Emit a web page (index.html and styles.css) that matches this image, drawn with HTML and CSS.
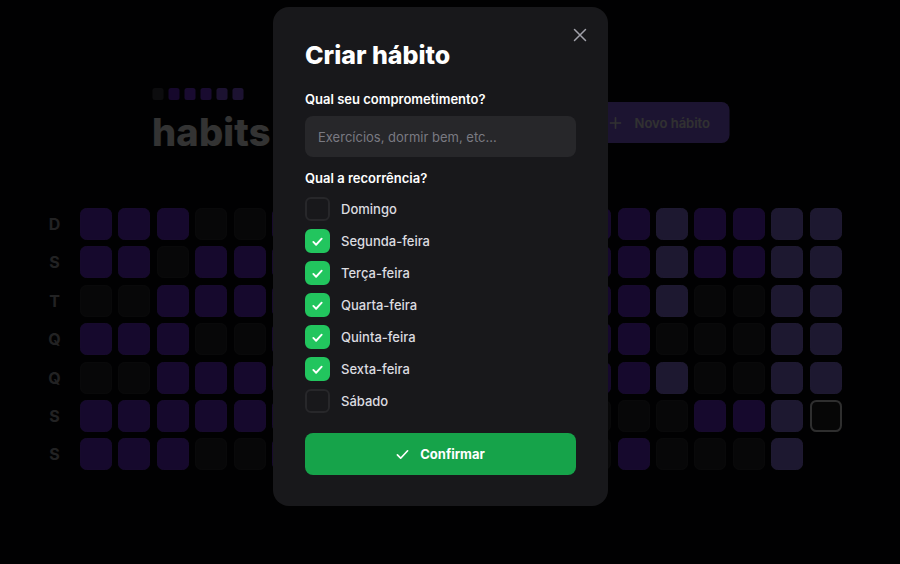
FILE: index.html
```html
<!DOCTYPE html>
<html lang="pt-BR">
<head>
<meta charset="utf-8">
<title>habits</title>
<link rel="stylesheet" href="styles.css">
</head>
<body>
<div class="app">
  <header class="header">
    <div class="logo">
      <div class="logo-squares">
        <span class="ls ls0"></span><span class="ls ls1"></span><span class="ls ls2"></span><span class="ls ls3"></span><span class="ls ls4"></span><span class="ls ls5"></span>
      </div>
      <div class="logo-text">habits</div>
    </div>
    <button class="new-habit" type="button">
      <svg width="12" height="12" viewBox="0 0 12 12" fill="none" stroke="currentColor" stroke-width="1.6" stroke-linecap="round"><path d="M6 0.8v10.4M0.8 6h10.4"/></svg>
      Novo hábito
    </button>
  </header>

  <section class="summary">
    <div class="weekdays">
      <div class="wd">D</div><div class="wd">S</div><div class="wd">T</div><div class="wd">Q</div><div class="wd">Q</div><div class="wd">S</div><div class="wd">S</div>
    </div>
    <div class="grid">
      <!-- col 1 -->
      <div class="cell c1"></div><div class="cell c1"></div><div class="cell c0"></div><div class="cell c1"></div><div class="cell c0"></div><div class="cell c1"></div><div class="cell c1"></div>
      <!-- col 2 -->
      <div class="cell c1"></div><div class="cell c1"></div><div class="cell c0"></div><div class="cell c1"></div><div class="cell c0"></div><div class="cell c1"></div><div class="cell c1"></div>
      <!-- col 3 -->
      <div class="cell c1"></div><div class="cell c0"></div><div class="cell c1"></div><div class="cell c1"></div><div class="cell c1"></div><div class="cell c1"></div><div class="cell c1"></div>
      <!-- col 4 -->
      <div class="cell c0"></div><div class="cell c1"></div><div class="cell c1"></div><div class="cell c0"></div><div class="cell c1"></div><div class="cell c1"></div><div class="cell c0"></div>
      <!-- col 5 -->
      <div class="cell c0"></div><div class="cell c1"></div><div class="cell c1"></div><div class="cell c0"></div><div class="cell c1"></div><div class="cell c1"></div><div class="cell c0"></div>
      <!-- col 6 -->
      <div class="cell c1"></div><div class="cell c1"></div><div class="cell c1"></div><div class="cell c1"></div><div class="cell c1"></div><div class="cell c1"></div><div class="cell c1"></div>
      <!-- col 7 -->
      <div class="cell c1"></div><div class="cell c0"></div><div class="cell c1"></div><div class="cell c1"></div><div class="cell c0"></div><div class="cell c1"></div><div class="cell c1"></div>
      <!-- col 8 -->
      <div class="cell c0"></div><div class="cell c1"></div><div class="cell c1"></div><div class="cell c0"></div><div class="cell c1"></div><div class="cell c1"></div><div class="cell c0"></div>
      <!-- col 9 -->
      <div class="cell c1"></div><div class="cell c1"></div><div class="cell c0"></div><div class="cell c1"></div><div class="cell c1"></div><div class="cell c0"></div><div class="cell c1"></div>
      <!-- col 10 -->
      <div class="cell c1"></div><div class="cell c0"></div><div class="cell c1"></div><div class="cell c1"></div><div class="cell c0"></div><div class="cell c1"></div><div class="cell c1"></div>
      <!-- col 11 -->
      <div class="cell c0"></div><div class="cell c1"></div><div class="cell c1"></div><div class="cell c1"></div><div class="cell c1"></div><div class="cell c0"></div><div class="cell c0"></div>
      <!-- col 12 -->
      <div class="cell c1"></div><div class="cell c1"></div><div class="cell c0"></div><div class="cell c0"></div><div class="cell c1"></div><div class="cell c1"></div><div class="cell c1"></div>
      <!-- col 13 -->
      <div class="cell c1"></div><div class="cell c1"></div><div class="cell c1"></div><div class="cell c0"></div><div class="cell c1"></div><div class="cell c0"></div><div class="cell c1"></div>
      <!-- col 14 -->
      <div class="cell c1"></div><div class="cell c1"></div><div class="cell c1"></div><div class="cell c1"></div><div class="cell c1"></div><div class="cell c0"></div><div class="cell c0"></div>
      <!-- col 15 -->
      <div class="cell c1"></div><div class="cell c1"></div><div class="cell c1"></div><div class="cell c1"></div><div class="cell c1"></div><div class="cell c0"></div><div class="cell c1"></div>
      <!-- col 16 -->
      <div class="cell c2"></div><div class="cell c2"></div><div class="cell c2"></div><div class="cell c0"></div><div class="cell c2"></div><div class="cell c0"></div><div class="cell c0"></div>
      <!-- col 17 -->
      <div class="cell c1"></div><div class="cell c1"></div><div class="cell c0"></div><div class="cell c0"></div><div class="cell c0"></div><div class="cell c1"></div><div class="cell c0"></div>
      <!-- col 18 -->
      <div class="cell c1"></div><div class="cell c1"></div><div class="cell c0"></div><div class="cell c0"></div><div class="cell c0"></div><div class="cell c1"></div><div class="cell c0"></div>
      <!-- col 19 -->
      <div class="cell c2"></div><div class="cell c2"></div><div class="cell c2"></div><div class="cell c2"></div><div class="cell c2"></div><div class="cell c2"></div><div class="cell c2"></div>
      <!-- col 20 -->
      <div class="cell c2"></div><div class="cell c2"></div><div class="cell c2"></div><div class="cell c2"></div><div class="cell c2"></div><div class="cell c0 today"></div>
    </div>
  </section>
</div>

<div class="overlay"></div>

<div class="dialog" role="dialog">
  <button class="close" type="button" aria-label="Fechar">
    <svg width="14" height="14" viewBox="0 0 14 14" fill="none" stroke="currentColor" stroke-width="1.5" stroke-linecap="round"><path d="M1.5 1.5l11 11M12.5 1.5l-11 11"/></svg>
  </button>
  <h2 class="title">Criar hábito</h2>
  <form class="form">
    <label class="label" for="title">Qual seu comprometimento?</label>
    <input class="input" id="title" type="text" placeholder="Exercícios, dormir bem, etc...">
    <label class="label label-gap">Qual a recorrência?</label>
    <div class="days">
      <div class="day"><span class="box"></span><span class="day-name">Domingo</span></div>
      <div class="day"><span class="box checked"><svg width="13" height="13" viewBox="0 0 14 14" fill="none" stroke="currentColor" stroke-width="2" stroke-linecap="round" stroke-linejoin="round"><path d="M2.5 7.5l3 3 6-6.5"/></svg></span><span class="day-name">Segunda-feira</span></div>
      <div class="day"><span class="box checked"><svg width="13" height="13" viewBox="0 0 14 14" fill="none" stroke="currentColor" stroke-width="2" stroke-linecap="round" stroke-linejoin="round"><path d="M2.5 7.5l3 3 6-6.5"/></svg></span><span class="day-name">Terça-feira</span></div>
      <div class="day"><span class="box checked"><svg width="13" height="13" viewBox="0 0 14 14" fill="none" stroke="currentColor" stroke-width="2" stroke-linecap="round" stroke-linejoin="round"><path d="M2.5 7.5l3 3 6-6.5"/></svg></span><span class="day-name">Quarta-feira</span></div>
      <div class="day"><span class="box checked"><svg width="13" height="13" viewBox="0 0 14 14" fill="none" stroke="currentColor" stroke-width="2" stroke-linecap="round" stroke-linejoin="round"><path d="M2.5 7.5l3 3 6-6.5"/></svg></span><span class="day-name">Quinta-feira</span></div>
      <div class="day"><span class="box checked"><svg width="13" height="13" viewBox="0 0 14 14" fill="none" stroke="currentColor" stroke-width="2" stroke-linecap="round" stroke-linejoin="round"><path d="M2.5 7.5l3 3 6-6.5"/></svg></span><span class="day-name">Sexta-feira</span></div>
      <div class="day"><span class="box"></span><span class="day-name">Sábado</span></div>
    </div>
    <button class="confirm" type="button">
      <svg width="13" height="13" viewBox="0 0 14 14" fill="none" stroke="currentColor" stroke-width="1.8" stroke-linecap="round" stroke-linejoin="round"><path d="M1.5 7.5l3.5 3.5 7.5-8"/></svg>
      Confirmar
    </button>
  </form>
</div>
</body>
</html>
```

FILE: styles.css
```css
* { box-sizing: border-box; }

html, body {
  margin: 0;
  height: 100%;
}

body {
  background: #09090a;
  color: #fff;
  font-family: Inter, "Noto Sans", "Liberation Sans", sans-serif;
  overflow: hidden;
}

.app {
  width: 880px;
  display: flex;
  flex-direction: column;
  align-items: center;
  padding-top: 88px;
}

/* Header */
.header {
  width: 577px;
  display: flex;
  justify-content: space-between;
  align-items: flex-start;
  transform: translateX(0.5px);
}

.logo-squares {
  display: flex;
  gap: 4.5px;
}

.ls {
  width: 11.5px;
  height: 11.5px;
  border-radius: 2.5px;
}
.ls0 { background: #3f3f46; }
.ls1 { background: #6d28d9; }
.ls2 { background: #7c3aed; }
.ls3 { background: #7c3aed; }
.ls4 { background: #8b5cf6; }
.ls5 { background: #8b5cf6; }

.logo-text {
  margin-top: 13px;
  font-size: 38px;
  line-height: 38px;
  font-weight: 800;
  letter-spacing: 0.2px;
  color: #fff;
}

.new-habit {
  margin-top: 14px;
  height: 41px;
  padding: 0 19px 0 20px;
  display: flex;
  align-items: center;
  gap: 13px;
  background: #8d66f6;
  border: none;
  border-radius: 8px;
  color: #f4f4f5;
  font-family: inherit;
  font-size: 13px;
  font-weight: 600;
}

/* Summary grid */
.summary {
  margin-top: 57.5px;
  display: flex;
  gap: 9.6px;
}

.weekdays {
  display: grid;
  grid-template-rows: repeat(7, 32px);
  row-gap: 6.4px;
}

.wd {
  width: 32px;
  height: 32px;
  display: flex;
  align-items: center;
  justify-content: center;
  color: #a8a8b0;
  font-size: 16px;
  font-weight: 700;
}

.grid {
  display: grid;
  grid-template-rows: repeat(7, 32px);
  grid-auto-flow: column;
  grid-auto-columns: 32px;
  gap: 6.4px;
}

.cell {
  width: 32px;
  height: 32px;
  border-radius: 6.4px;
  border: 1.6px solid transparent;
}

.c0 { background: #27272a; border-color: #303036; }
.c1 { background: #6e30de; border-color: #7234e2; }
.c2 { background: #9279f0; border-color: #957df2; }
.today { border: 2px solid #e4e4e7; background: #1f1f22; }

/* Overlay + dialog */
.overlay {
  position: fixed;
  inset: 0;
  background: rgba(0, 0, 0, 0.8);
}

.dialog {
  position: fixed;
  left: 273px;
  top: 7px;
  width: 335px;
  padding: 32px 32px 31px;
  background: #18181b;
  border-radius: 16px;
}

.close {
  position: absolute;
  top: 21px;
  right: 21px;
  width: 14px;
  height: 14px;
  padding: 0;
  border: none;
  background: none;
  color: #a1a1aa;
  display: flex;
}

.title {
  margin: 0;
  font-size: 25px;
  line-height: 32px;
  font-weight: 800;
  color: #fff;
}

.form {
  margin-top: 18px;
  display: flex;
  flex-direction: column;
}

.label {
  font-size: 13px;
  line-height: 20px;
  font-weight: 600;
  color: #fff;
}

.label-gap { margin-top: 11px; }

.input {
  margin-top: 7px;
  height: 41px;
  padding: 0 13px;
  background: #27272a;
  border: none;
  border-radius: 8px;
  color: #fff;
  font-family: inherit;
  font-size: 13px;
  outline: none;
}
.input::placeholder { color: #7a7a82; }

.days {
  margin-top: 9px;
  display: flex;
  flex-direction: column;
  gap: 8px;
}

.day {
  display: flex;
  align-items: center;
  gap: 11px;
}

.box {
  width: 25px;
  height: 24px;
  border-radius: 6px;
  background: #18181b;
  border: 2px solid #27272a;
  display: flex;
  align-items: center;
  justify-content: center;
  color: #fff;
}

.box.checked {
  background: #22c55e;
  border-color: #22c55e;
}

.day-name {
  font-size: 13px;
  line-height: 16px;
  font-weight: 500;
  color: #dcdce0;
}

.confirm {
  margin-top: 20px;
  height: 42px;
  display: flex;
  align-items: center;
  justify-content: center;
  gap: 11px;
  background: #16a34a;
  border: none;
  border-radius: 8px;
  color: #fff;
  font-family: inherit;
  font-size: 13px;
  font-weight: 700;
}
```
